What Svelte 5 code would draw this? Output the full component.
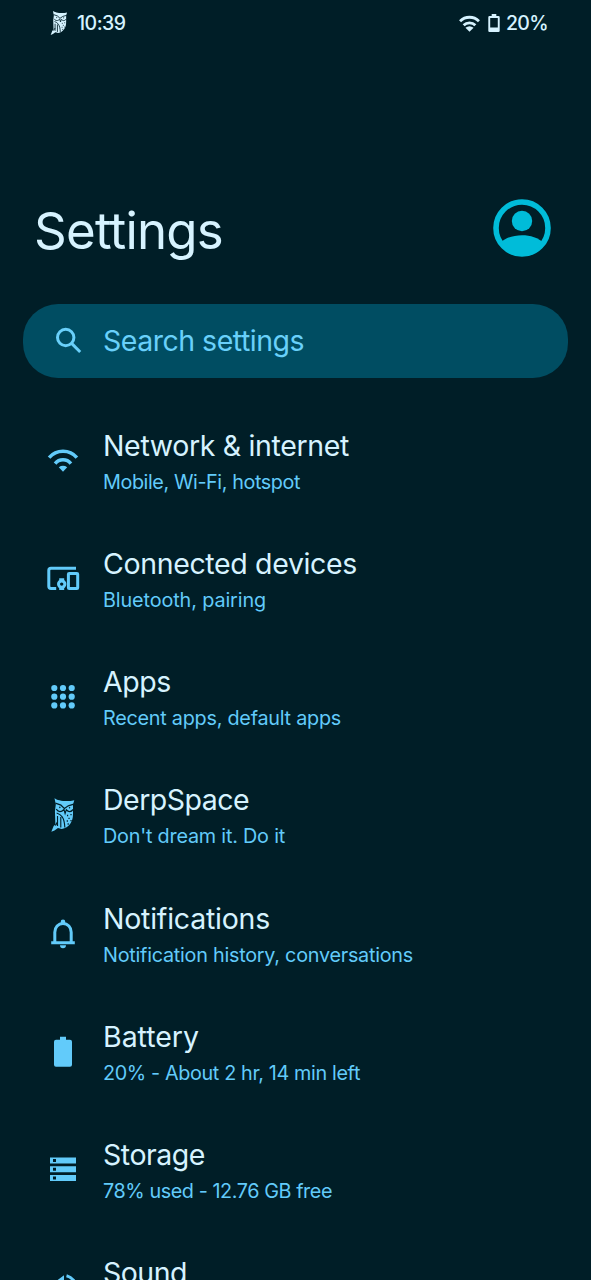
<script>
  const items = [
    { icon: 'wifi', title: 'Network & internet', sub: 'Mobile, Wi-Fi, hotspot', tw: 244, sw: 195 },
    { icon: 'devices', title: 'Connected devices', sub: 'Bluetooth, pairing', tw: 252, sw: 161 },
    { icon: 'apps', title: 'Apps', sub: 'Recent apps, default apps', tw: 66, sw: 236 },
    { icon: 'owl', title: 'DerpSpace', sub: "Don't dream it. Do it", tw: 144, sw: 180 },
    { icon: 'bell', title: 'Notifications', sub: 'Notification history, conversations', tw: 165, sw: 308 },
    { icon: 'battery', title: 'Battery', sub: '20% - About 2 hr, 14 min left', tw: 94, sw: 255 },
    { icon: 'storage', title: 'Storage', sub: '78% used - 12.76 GB free', tw: 100, sw: 227 },
    { icon: 'sound', title: 'Sound', tw: 82 }
  ];

  // Tracks the text so that it fills the given width.
  function fit(node, width) {
    const natural = node.getBoundingClientRect().width;
    node.style.letterSpacing = (width + 2 - natural) / node.textContent.length + 'px';
  }
</script>

{#snippet owl()}
  <g transform="translate(2.2 0) scale(.86 1)">
    <path fill="currentColor" d="M8.5 1.2C12 3.6 23 5.2 31.5 3.2L30 7.5V17C30 25 25.5 30.5 17 32L12.5 31 8.5 33.4 4.8 34.8 7.5 29 9.5 27.5 9 14 10 7.5Z" />
    <g class="cut">
      <path d="M9.5 6.2 16 8.2 20 11.5 24.5 8.8 31 7.2" />
      <path d="M10.5 12.2C13 15.5 16.5 15.2 19.5 12.5L20.8 16.5 22.2 12.8C25 15.5 28 15 30 12.5" />
      <circle cx="14.7" cy="10.4" r=".8" /><circle cx="26" cy="10.8" r=".8" />
      <path d="M11 16C16 17.5 20 20 20.5 30.5M12 19V29M15.8 20V30.5M9.5 28.5 12 25" />
      <path d="M23 18.5h1.4M27 17.7h1.4M24.7 21.3H26.1M22.7 24H24.1M27 23.7h1.4M23.7 27H25.1" />
    </g>
  </g>
{/snippet}

{#snippet wifi()}
  <path class="line wide" d="M4.1 14.7A18.4 18.4 0 0 1 31.9 14.7M10.1 20.6A10.2 10.2 0 0 1 25.9 20.6" />
  <path fill="currentColor" d="M18 28.7 13.8 24.3Q18 21.4 22.2 24.3Z" />
{/snippet}

<div class="screen">
  <div class="status">
    <svg class="s-owl" viewBox="4 0 28 36">{@render owl()}</svg>
    <span class="clock"><span use:fit={46.5}>10:39</span></span>
    <svg class="s-wifi" viewBox="0 0 24 18">
      <path class="line" d="M2 6.5A14.3 14.3 0 0 1 22 6.5M5.8 10.9A8.7 8.7 0 0 1 18.2 10.9" />
      <path fill="currentColor" d="M12 17.8 7.7 13.5Q12 10.2 16.3 13.5Z" />
    </svg>
    <svg class="s-bat" viewBox="0 0 12 18">
      <path fill="currentColor" fill-rule="evenodd" d="M3.7 0h4.6v2H10.5q1.2 0 1.2 1.2V16.8q0 1.2-1.2 1.2H1.5q-1.2 0-1.2-1.2V3.2Q.3 2 1.5 2H3.7ZM2.2 4v9.6h7.6V4Z" />
    </svg>
    <span class="pct"><span use:fit={40}>20%</span></span>
  </div>

  <header>
    <h1><span use:fit={187}>Settings</span></h1>
    <svg class="avatar" viewBox="0 0 58 58">
      <circle cx="29" cy="29" r="26" fill="none" stroke="currentColor" stroke-width="5.6" />
      <circle cx="29" cy="22" r="10.2" fill="currentColor" />
      <path fill="currentColor" d="M7 44C18 33.5 40 33.5 51 44A27 27 0 0 1 7 44Z" />
    </svg>
  </header>

  <div class="search">
    <svg viewBox="0 0 36 36">
      <circle class="line" cx="14.7" cy="14.5" r="8.2" />
      <path class="line" d="M20.6 20.4 29.2 29" />
    </svg>
    <span class="hint"><span use:fit={199}>Search settings</span></span>
  </div>

  <main>
    {#each items as item}
      <div class="row">
        <svg viewBox="0 0 36 36">
          {#if item.icon === 'wifi'}
            {@render wifi()}
          {:else if item.icon === 'devices'}
            <path class="line" d="M31 7.2H6Q3.8 7.2 3.8 9.4V25.3Q3.8 27.5 6 27.5H11.2" />
            <rect class="line" x="23.4" y="12.5" width="9.3" height="15" rx=".8" />
            <circle class="line" cx="16.7" cy="23.1" r="3.2" />
            <path fill="currentColor" d="M14.2 17.2h5v3.5h-5zM14.2 25.7h5v3.3h-5z" />
          {:else if item.icon === 'apps'}
            {#each [9.3, 18, 26.7] as x}
              {#each [9, 17.7, 26.4] as y}
                <circle cx={x} cy={y} r="3.1" fill="currentColor" />
              {/each}
            {/each}
          {:else if item.icon === 'owl'}
            {@render owl()}
          {:else if item.icon === 'bell'}
            <path class="line" d="M6.2 26.7H29.8M9.8 26.7V16.2C9.8 11.2 13.2 7.5 18 7.5S26.2 11.2 26.2 16.2V26.7" />
            <path fill="currentColor" d="M15.7 7.7V5.9a2.3 2.3 0 0 1 4.6 0V7.7ZM15 29.2h6a3 3 0 0 1-6 0Z" />
          {:else if item.icon === 'battery'}
            <path fill="currentColor" d="M15 2.7h6v3h4q2 0 2 2V30.7q0 2-2 2H11q-2 0-2-2V7.7q0-2 2-2h4Z" />
          {:else if item.icon === 'storage'}
            <path fill="currentColor" fill-rule="evenodd" d="M5 5.5h26v6H5zM8 7v3h3v-3zM5 14.3h26v6H5zM8 15.8v3h3v-3zM5 23.1h26v6H5zM8 24.6v3h3v-3z" />
          {:else}
            <path fill="currentColor" d="M19 5.2V31L12 24H6V12H10Z" />
            <path class="line" d="M21.5 5.7A12.8 12.8 0 0 1 21.5 30.5" />
          {/if}
        </svg>
        <div class="copy">
          <div class="title"><span use:fit={item.tw}>{item.title}</span></div>
          <div class="sub">
            {#if item.sub}<span use:fit={item.sw}>{item.sub}</span>{/if}
          </div>
        </div>
      </div>
    {/each}
  </main>
</div>

<style>
  :global(body) { background: #001e27; overflow: hidden; }
  .screen {
    width: 591px;
    height: 1280px;
    box-sizing: border-box;
    overflow: hidden;
    background: #001e27;
    color: #d6f3ff;
    font-family: Inter, Roboto, sans-serif;
    white-space: nowrap;
  }
  svg { display: block; flex: none; }
  .line { fill: none; stroke: currentColor; stroke-width: 3; }
  .wide { stroke-width: 3.5; }
  .cut { fill: #001e27; }
  .cut path { fill: none; stroke: #001e27; stroke-width: 1.3; }
  .status {
    display: flex;
    align-items: center;
    height: 46px;
    padding: 0 44px 0 49px;
    box-sizing: border-box;
    font-size: 19.5px;
    font-weight: 550;
  }
  .s-owl { width: 20px; height: 26px; }
  .clock { margin-left: 8px; flex: 1; }
  .s-wifi { width: 23px; height: 17px; margin-right: 7px; }
  .s-bat { width: 12px; height: 18px; }
  .pct { margin-left: 6px; width: 41px; }
  header {
    display: flex;
    align-items: center;
    justify-content: space-between;
    height: 258px;
    padding: 106px 40px 0 34px;
    box-sizing: border-box;
  }
  h1 { margin: 6px 0 0; font-size: 51px; line-height: 60px; font-weight: 400; }
  .avatar { width: 58px; height: 58px; color: #00bcd9; }
  .search {
    display: flex;
    align-items: center;
    height: 74px;
    margin: 0 23px;
    padding-left: 28px;
    border-radius: 35px;
    background: #004d62;
    color: #69d0fa;
    font-size: 28.5px;
    font-weight: 400;
  }
  .search svg { width: 36px; height: 36px; margin-right: 16px; }
  .hint { padding-bottom: 2px; }
  main { padding-top: 23.8px; }
  .row {
    display: flex;
    align-items: center;
    height: 118.2px;
    padding-left: 45px;
  }
  .row svg { width: 36px; height: 36px; margin-right: 22px; color: #62cbfa; }
  .copy { padding-top: 2px; }
  .title { font-size: 28.5px; line-height: 38px; font-weight: 400; }
  .sub { height: 30px; margin-top: 2px; font-size: 19.8px; line-height: 30px; font-weight: 400; color: #62cbfa; }
</style>
